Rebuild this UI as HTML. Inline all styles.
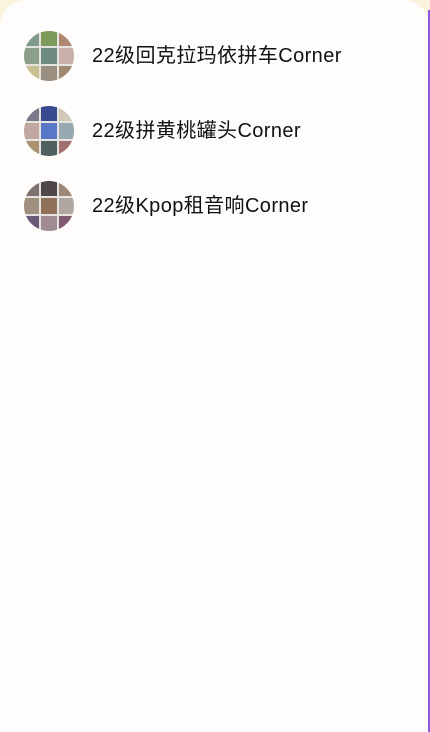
<!DOCTYPE html>
<html><head><meta charset="utf-8"><style>
html,body{margin:0;padding:0;width:430px;height:732px;overflow:hidden;background:#fcf3de;}
.card{position:absolute;left:0;top:0;width:429px;height:732px;background:#fefdfb;border-radius:26px 26px 0 0;}
.edge{position:absolute;left:428px;top:10px;width:2px;height:722px;background:#8a5ae0;}
.row{position:absolute;left:24px;height:50px;display:flex;align-items:center;}
.av{width:50px;height:50px;border-radius:50%;overflow:hidden;display:grid;grid-template-columns:repeat(3,1fr);grid-template-rows:repeat(3,1fr);gap:2px;background:#e6e4e0;}
.av div{width:100%;height:100%;}
.t{margin-left:18px;margin-top:-5px;font-family:"Liberation Sans","Noto Sans CJK SC",sans-serif;font-size:20px;letter-spacing:0.4px;color:#111;}
</style></head><body>
<div class="card"></div><div class="edge"></div>
<div class="row" style="top:31px"><div class="av">
<div style="background:#7f9a88"></div><div style="background:#7c9a5a"></div><div style="background:#b08872"></div>
<div style="background:#8aa088"></div><div style="background:#6f8a80"></div><div style="background:#c8b0a8"></div>
<div style="background:#c8c090"></div><div style="background:#9a8e80"></div><div style="background:#a08a70"></div>
</div><span class="t">22级回克拉玛依拼车Corner</span></div>
<div class="row" style="top:106px"><div class="av">
<div style="background:#7a7a8a"></div><div style="background:#3a4a90"></div><div style="background:#d0c8b8"></div>
<div style="background:#c0a8a0"></div><div style="background:#5a78c8"></div><div style="background:#98a8b0"></div>
<div style="background:#a89070"></div><div style="background:#506060"></div><div style="background:#a07070"></div>
</div><span class="t">22级拼黄桃罐头Corner</span></div>
<div class="row" style="top:181px"><div class="av">
<div style="background:#807070"></div><div style="background:#504848"></div><div style="background:#a08878"></div>
<div style="background:#a09080"></div><div style="background:#907058"></div><div style="background:#b0a8a0"></div>
<div style="background:#6a5a78"></div><div style="background:#a08c90"></div><div style="background:#805870"></div>
</div><span class="t">22级Kpop租音响Corner</span></div>
</body></html>
